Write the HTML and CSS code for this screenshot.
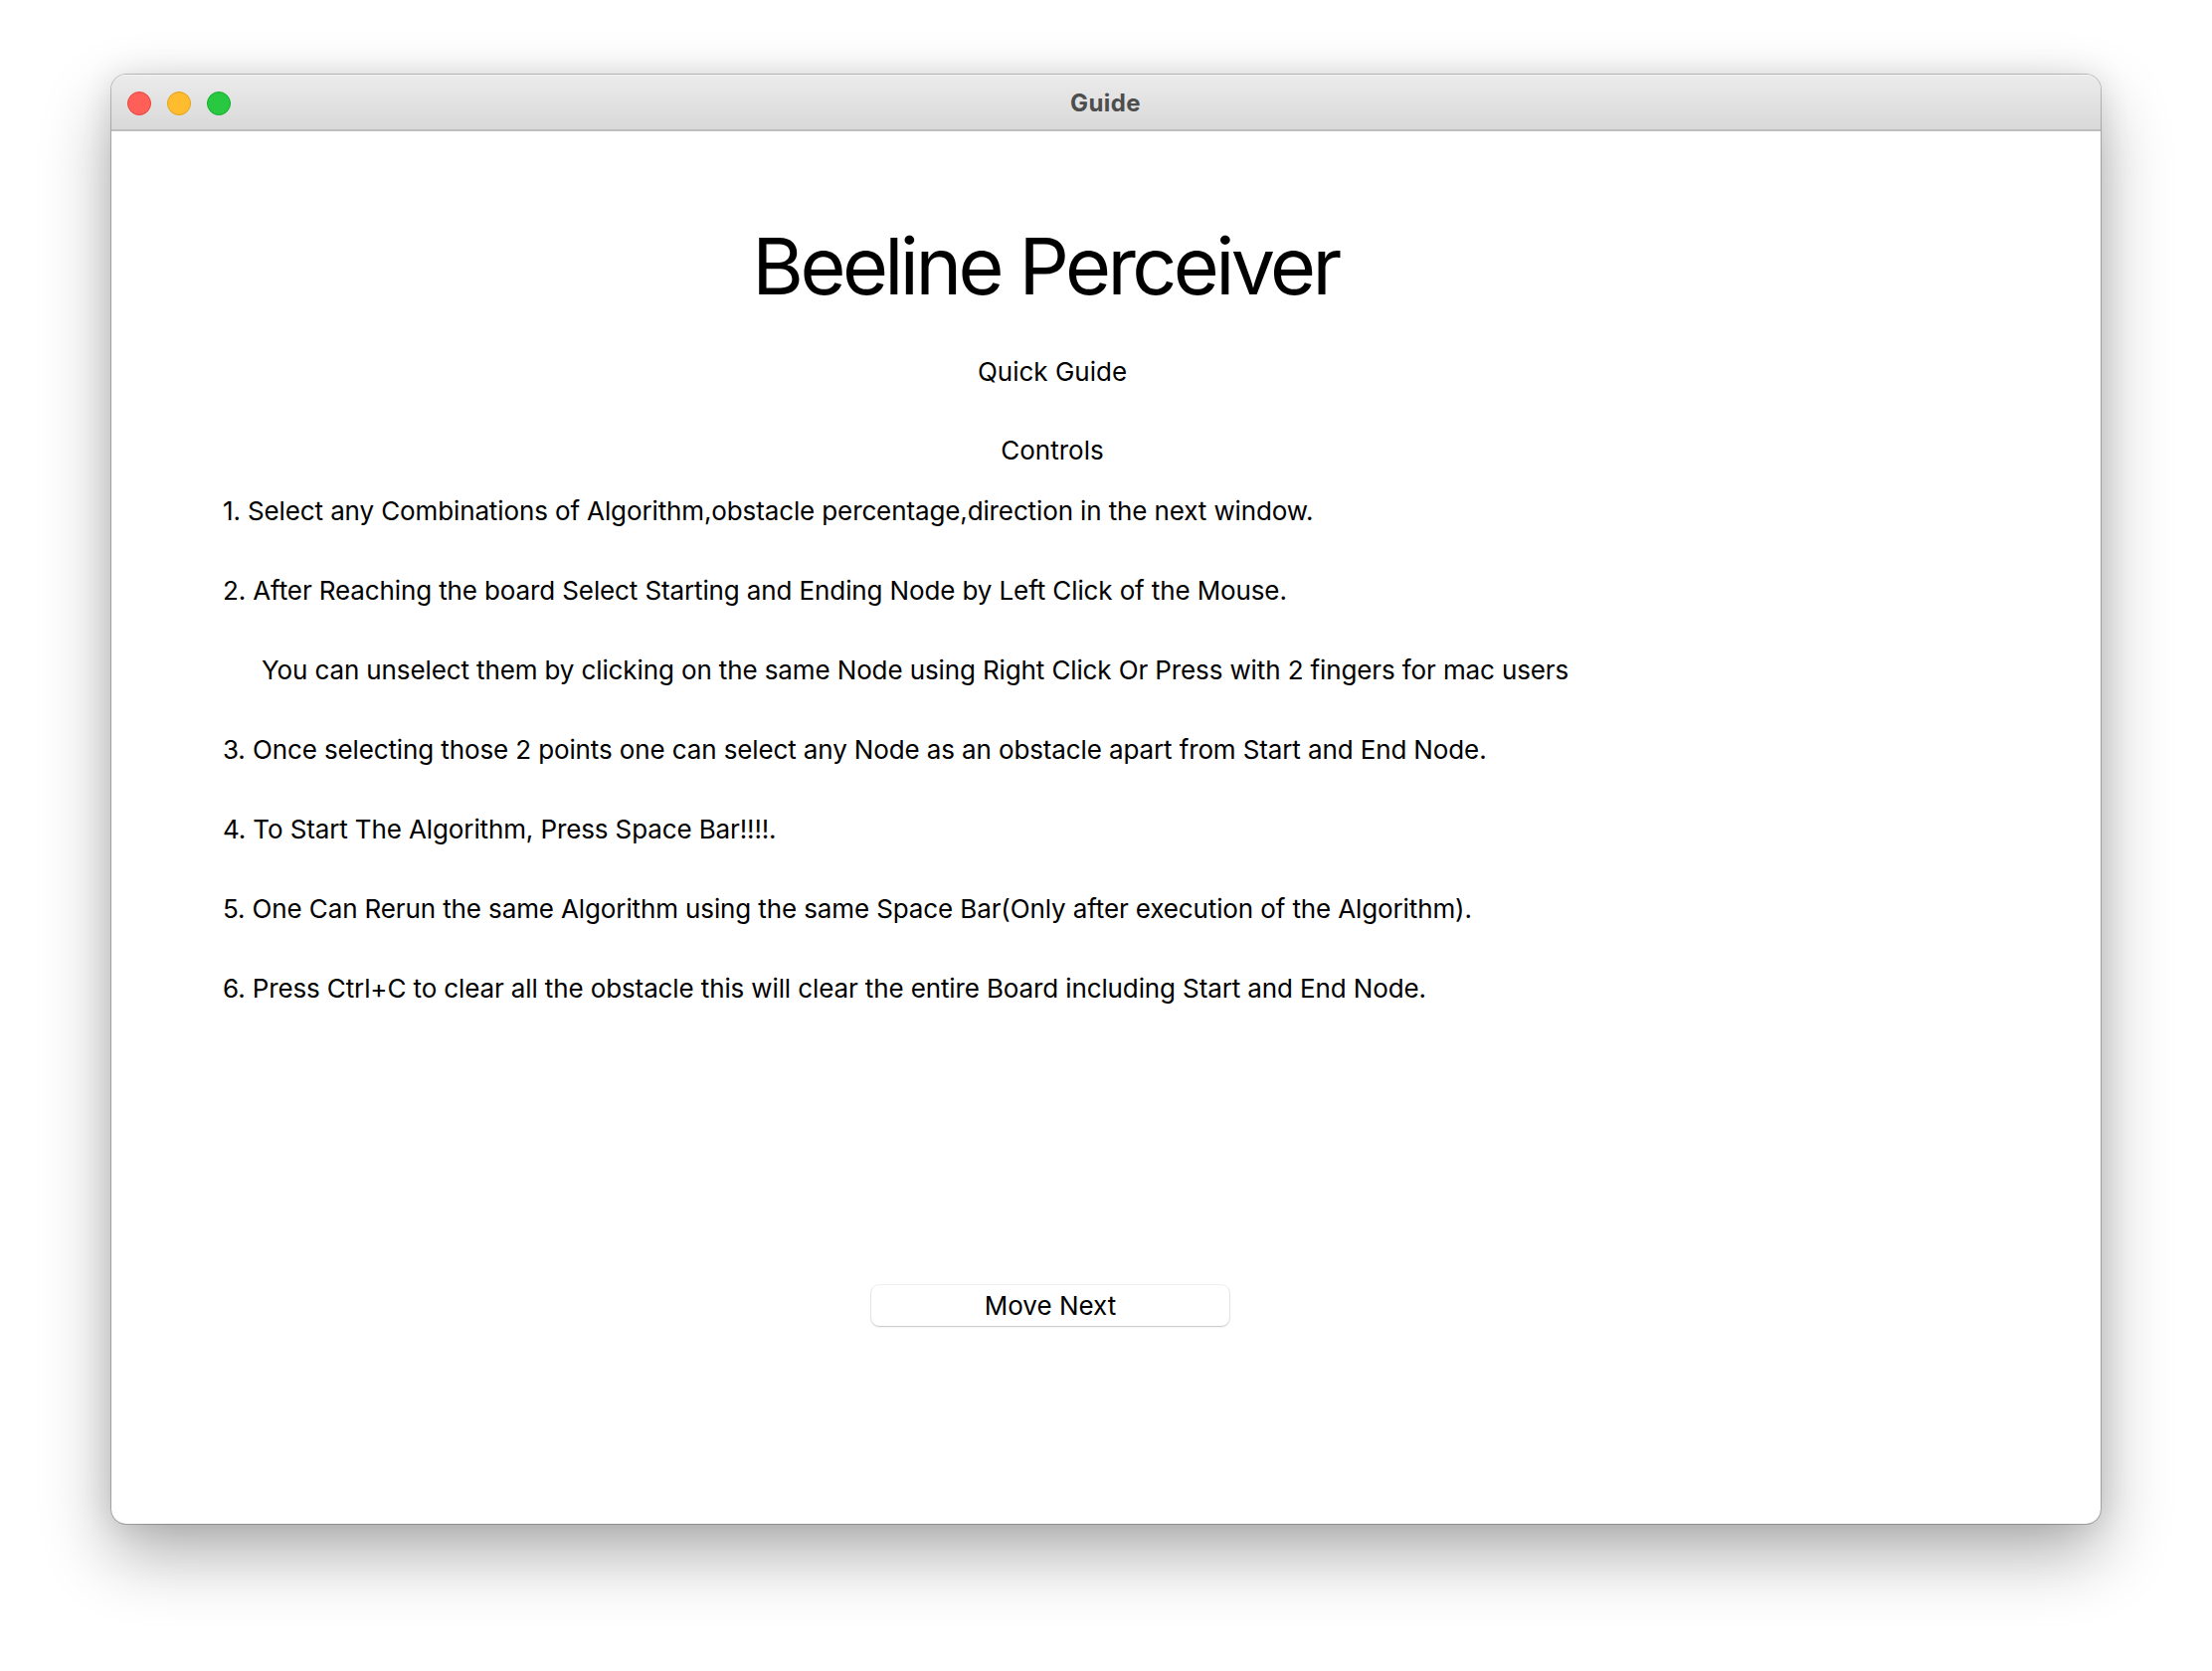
FILE: index.html
```html
<!DOCTYPE html>
<html lang="en">
<head>
<meta charset="utf-8">
<title>Guide</title>
<link rel="stylesheet" href="styles.css">
</head>
<body>
<div class="window">
  <div class="titlebar">
    <div class="lights">
      <span class="light red"></span>
      <span class="light yellow"></span>
      <span class="light green"></span>
    </div>
    <div class="wtitle">Guide</div>
  </div>
  <div class="content">
    <h1 class="apptitle">Beeline Perceiver</h1>
    <div class="center-line">Quick Guide</div>
    <div class="center-line controls">Controls</div>
    <ul class="steps">
      <li>1. Select any Combinations of Algorithm,obstacle percentage,direction in the next window.</li>
      <li>2. After Reaching the board Select Starting and Ending Node by Left Click of the Mouse.</li>
      <li class="indent">You can unselect them by clicking on the same Node using Right Click Or Press with 2 fingers for mac users</li>
      <li>3. Once selecting those 2 points one can select any Node as an obstacle apart from Start and End Node.</li>
      <li>4. To Start The Algorithm, Press Space Bar!!!!.</li>
      <li>5. One Can Rerun the same Algorithm using the same Space Bar(Only after execution of the Algorithm).</li>
      <li>6. Press Ctrl+C to clear all the obstacle this will clear the entire Board including Start and End Node.</li>
    </ul>
    <div class="btnrow"><button class="btn">Move Next</button></div>
  </div>
</div>
</body>
</html>
```
FILE: styles.css
```css
html, body {
  margin: 0;
  padding: 0;
  background: #ffffff;
}
body {
  width: 2224px;
  height: 1680px;
  overflow: hidden;
  font-family: Inter, "Noto Sans", "Liberation Sans", sans-serif;
  color: #000;
}
.window {
  margin: 75px 0 0 112px;
  width: 2000px;
  height: 1457px;
  box-sizing: border-box;
  border-radius: 15px;
  background: #fff;
  overflow: hidden;
  box-shadow: 0 0 0 1px rgba(0,0,0,0.22), 0 30px 70px rgba(0,0,0,0.32), 0 0 30px rgba(0,0,0,0.10);
  display: flex;
  flex-direction: column;
}
.titlebar {
  height: 57px;
  flex: none;
  box-sizing: border-box;
  background: linear-gradient(#ebebeb, #d9d9d9);
  border-bottom: 2px solid #bdbdbd;
  border-top: 1px solid #f4f4f4;
  position: relative;
  display: flex;
  align-items: center;
  justify-content: center;
}
.lights {
  position: absolute;
  left: 16px;
  top: 16px;
  display: flex;
  gap: 16px;
}
.light {
  width: 24px;
  height: 24px;
  border-radius: 50%;
  box-sizing: border-box;
}
.red { background: #ff5f57; border: 1px solid #e2463f; }
.yellow { background: #febc2e; border: 1px solid #e1a116; }
.green { background: #28c840; border: 1px solid #14ae2c; }
.wtitle {
  font-weight: 700;
  font-size: 24px;
  letter-spacing: 0.4px;
  color: #4d4d4d;
  margin-left: -1px;
}
.content {
  flex: 1;
  display: flex;
  flex-direction: column;
  padding-top: 85px;
}
.apptitle {
  margin: 0;
  font-weight: 400;
  font-size: 79px;
  line-height: 100px;
  text-align: center;
  padding-right: 122px;
  letter-spacing: -3.6px;
}
.center-line {
  font-size: 26px;
  line-height: 40px;
  text-align: center;
  padding-right: 108px;
  margin-top: 37px;
}
.controls {
  margin-top: 39px;
}
.steps {
  list-style: none;
  margin: 1px 0 0 0;
  padding: 0 0 0 112px;
  font-size: 26px;
  line-height: 80px;
  letter-spacing: -0.12px;
}
.steps li.indent {
  padding-left: 39px;
}
.btnrow {
  margin-top: 258px;
  display: flex;
  justify-content: center;
  padding-right: 112px;
}
.btn {
  width: 360px;
  height: 41px;
  border: none;
  border-radius: 8px;
  background: #fff;
  font-family: Inter, "Noto Sans", "Liberation Sans", sans-serif;
  font-size: 26px;
  color: #000;
  box-shadow: 0 0 0 1px rgba(0,0,0,0.06), 0 1px 2px rgba(0,0,0,0.18);
  padding: 0;
}
```
